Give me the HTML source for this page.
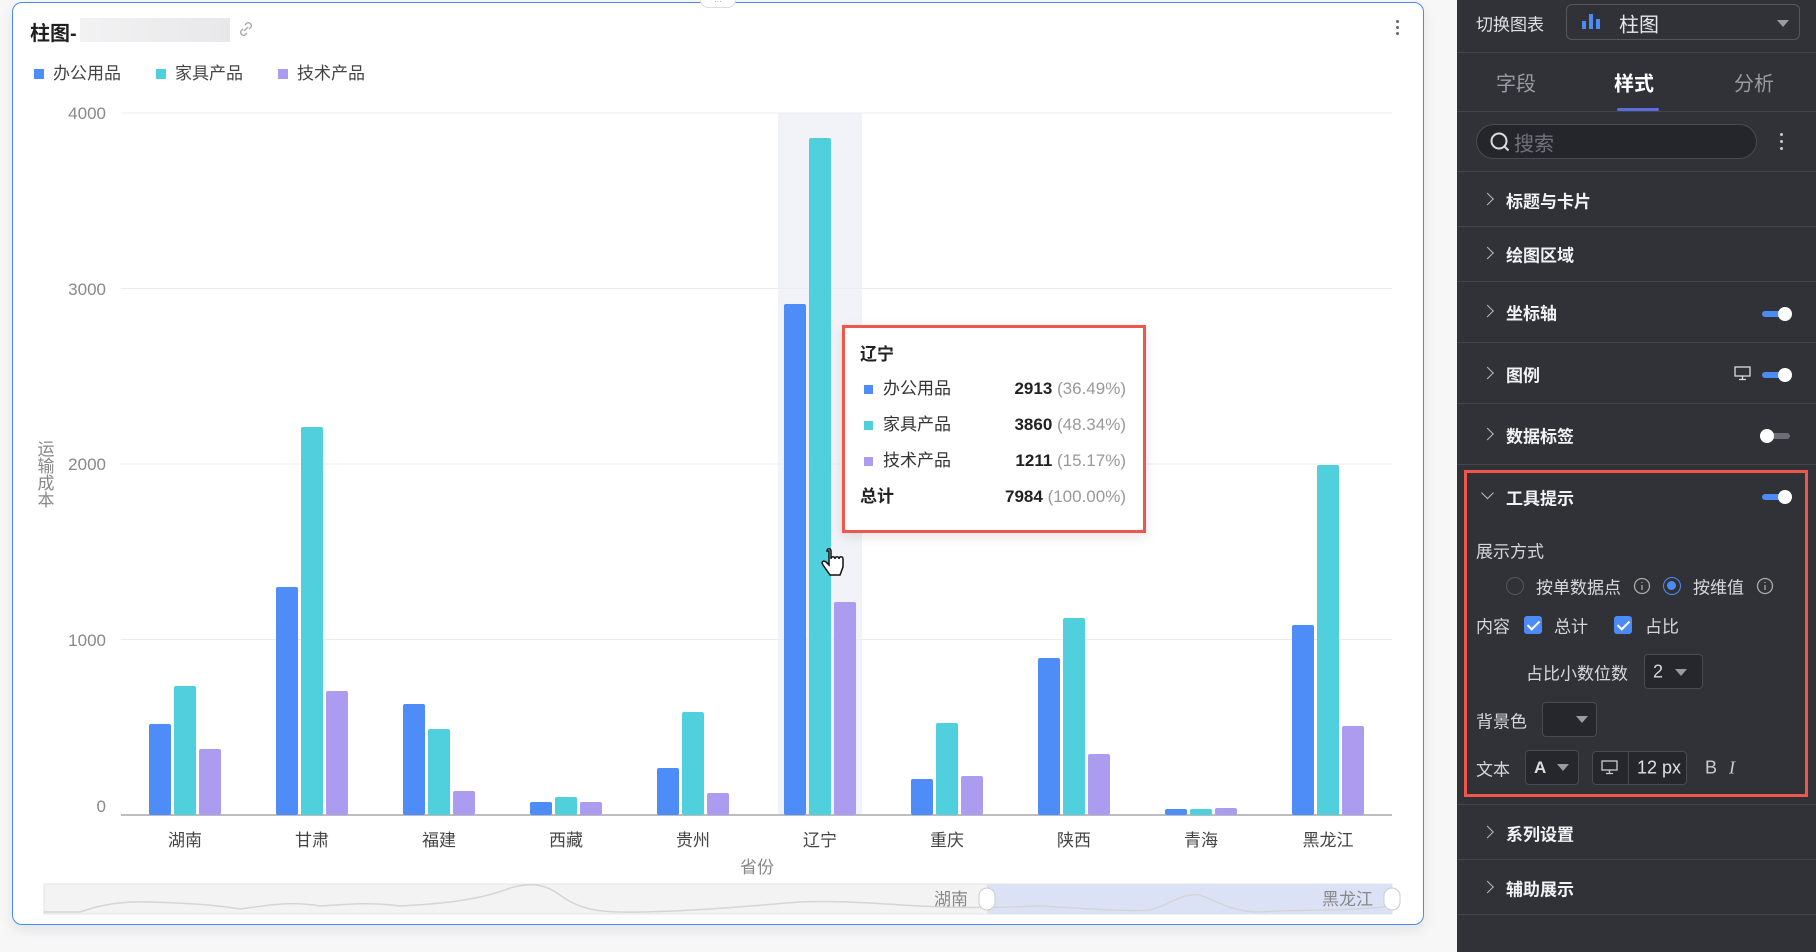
<!DOCTYPE html>
<html><head><meta charset="utf-8"><style>
*{box-sizing:border-box;margin:0;padding:0}
body{width:1816px;height:952px;background:#f7f7f8;font-family:"Liberation Sans","Noto Sans CJK SC",sans-serif;position:relative;overflow:hidden}
.card{position:absolute;left:12px;top:2px;width:1412px;height:923px;background:#fff;border:1.5px solid #4a8af4;border-radius:10px;box-shadow:0 6px 14px rgba(0,0,0,.08)}
.abs{position:absolute}
.panel{position:absolute;left:1457px;top:0;width:359px;height:952px;background:#313238;color:#e6e6ea}
.hr{position:absolute;left:0;width:359px;height:1px;background:#45464d}
.item{position:absolute;left:49px;font-size:17px;font-weight:bold;color:#f2f2f5;transform:translateY(-50%)}
.chev{position:absolute;left:26px;width:9px;height:9px;border-right:1.5px solid #bbb;border-top:1.5px solid #bbb;transform:translateY(-50%) rotate(45deg)}
.tog{position:absolute;left:305px;width:28px;height:6px;border-radius:3px;background:#4c8af5;transform:translateY(-50%)}
.tog::after{content:"";position:absolute;right:-2px;top:-4px;width:14px;height:14px;border-radius:50%;background:#fff}
.tog.off{background:#6c6e76}.tog.off::after{left:-2px;right:auto}
.lab{position:absolute;font-size:17px;color:#d8d8dc;transform:translateY(-50%)}
.box{position:absolute;border:1px solid #4a4b52;background:#26272c;border-radius:4px}
.tri{position:absolute;width:0;height:0;border-left:6px solid transparent;border-right:6px solid transparent;border-top:7px solid #9a9ca4}
.cb{position:absolute;width:18px;height:18px;background:#4c8af5;border-radius:3px;transform:translateY(-50%)}
.cb::after{content:"";position:absolute;left:6px;top:2px;width:5px;height:10px;border-right:2.5px solid #fff;border-bottom:2.5px solid #fff;transform:rotate(45deg)}
</style></head><body>
<div class="card"></div>
<div class="abs" style="left:700px;top:0;width:36px;height:8px;background:#fff;border:1px solid #ddd;border-top:none;border-radius:0 0 8px 8px;font-size:8px;color:#999;text-align:center;line-height:4px">···</div>
<div class="abs" style="left:30px;top:17px;font-size:20px;font-weight:bold;color:#1f1f1f">柱图-</div>
<div class="abs" style="left:80px;top:18px;width:150px;height:24px;background:linear-gradient(90deg,#f2f2f3,#e8e8ea)"></div>
<svg class="abs" style="left:237px;top:20px" width="18" height="18" viewBox="0 0 18 18" fill="none" stroke="#aaa" stroke-width="1.4"><path d="M7 11l4-4M8 5l2-2a3 3 0 014 4l-2 2M10 13l-2 2a3 3 0 01-4-4l2-2"/></svg>
<div class="abs" style="left:1396px;top:20px;width:3px;font-size:0">
<div style="width:3px;height:3px;background:#666;border-radius:50%;margin-bottom:3px"></div><div style="width:3px;height:3px;background:#666;border-radius:50%;margin-bottom:3px"></div><div style="width:3px;height:3px;background:#666;border-radius:50%"></div></div>
<div class="abs" style="left:34px;top:63px;font-size:17px;color:#444;display:flex;align-items:center;line-height:22px">
<span style="width:10px;height:10px;background:#4e8cf7;margin-right:9px"></span>办公用品
<span style="width:10px;height:10px;background:#4fd0dc;margin:0 9px 0 35px"></span>家具产品
<span style="width:10px;height:10px;background:#ac9cef;margin:0 9px 0 35px"></span>技术产品</div>

<svg class="abs" style="left:0;top:0" width="1440" height="952" font-family="Liberation Sans, Noto Sans CJK SC, sans-serif">
<rect x="778" y="113" width="84" height="702" fill="#f2f3f8"/>
<g stroke="#ececee" stroke-width="1">
<line x1="121" x2="1392" y1="113" y2="113"/><line x1="121" x2="1392" y1="288.5" y2="288.5"/><line x1="121" x2="1392" y1="464" y2="464"/><line x1="121" x2="1392" y1="639.5" y2="639.5"/></g>
<line x1="121" x2="1392" y1="815" y2="815" stroke="#bdbdbd" stroke-width="2"/>
<g fill="#888" font-size="17" text-anchor="end">
<text x="106" y="119">4000</text><text x="106" y="295">3000</text><text x="106" y="470">2000</text><text x="106" y="646">1000</text><text x="106" y="812">0</text></g>
<g fill="#888" font-size="17"><text x="44" y="440" writing-mode="tb">运输成本</text></g>
<g fill="#4e8cf7">
<rect x="149" y="724" width="22" height="91" rx="2"/><rect x="276" y="587" width="22" height="228" rx="2"/><rect x="403" y="704" width="22" height="111" rx="2"/><rect x="530" y="802" width="22" height="13" rx="2"/><rect x="657" y="768" width="22" height="47" rx="2"/><rect x="784" y="304" width="22" height="511" rx="2"/><rect x="911" y="779" width="22" height="36" rx="2"/><rect x="1038" y="658" width="22" height="157" rx="2"/><rect x="1165" y="809" width="22" height="6" rx="2"/><rect x="1292" y="625" width="22" height="190" rx="2"/></g>
<g fill="#4fd0dc">
<rect x="174" y="686" width="22" height="129" rx="2"/><rect x="301" y="427" width="22" height="388" rx="2"/><rect x="428" y="729" width="22" height="86" rx="2"/><rect x="555" y="797" width="22" height="18" rx="2"/><rect x="682" y="712" width="22" height="103" rx="2"/><rect x="809" y="138" width="22" height="677" rx="2"/><rect x="936" y="723" width="22" height="92" rx="2"/><rect x="1063" y="618" width="22" height="197" rx="2"/><rect x="1190" y="809" width="22" height="6" rx="2"/><rect x="1317" y="465" width="22" height="350" rx="2"/></g>
<g fill="#ac9cef">
<rect x="199" y="749" width="22" height="66" rx="2"/><rect x="326" y="691" width="22" height="124" rx="2"/><rect x="453" y="791" width="22" height="24" rx="2"/><rect x="580" y="802" width="22" height="13" rx="2"/><rect x="707" y="793" width="22" height="22" rx="2"/><rect x="834" y="602" width="22" height="213" rx="2"/><rect x="961" y="776" width="22" height="39" rx="2"/><rect x="1088" y="754" width="22" height="61" rx="2"/><rect x="1215" y="808" width="22" height="7" rx="2"/><rect x="1342" y="726" width="22" height="89" rx="2"/></g>
<g fill="#444" font-size="17" text-anchor="middle">
<text x="185" y="846">湖南</text><text x="312" y="846">甘肃</text><text x="439" y="846">福建</text><text x="566" y="846">西藏</text><text x="693" y="846">贵州</text><text x="820" y="846">辽宁</text><text x="947" y="846">重庆</text><text x="1074" y="846">陕西</text><text x="1201" y="846">青海</text><text x="1328" y="846">黑龙江</text>
<text x="757" y="873" fill="#888">省份</text></g>
<rect x="44" y="884" width="1348" height="30" fill="#f3f3f3" stroke="#e3e3e3"/>
<rect x="987" y="884" width="405" height="30" fill="#dbe2f6"/>
<path d="M44 912 L80 912 C100 905 120 901 150 902 C180 903 210 904 240 909 C270 905 290 901 320 906 C350 904 370 902 400 906 C440 904 480 900 510 888 C530 882 545 884 560 895 C580 910 600 913 640 912 C700 911 760 905 800 902 C840 900 880 904 920 906 C960 908 987 908 1040 906 C1080 908 1120 912 1150 910 C1170 905 1180 893 1200 895 C1215 900 1230 912 1260 912 C1300 909 1340 912 1392 906" fill="none" stroke="#d5d5d8" stroke-width="1.5"/>
<g fill="#888" font-size="17" text-anchor="end"><text x="968" y="905">湖南</text><text x="1373" y="905">黑龙江</text></g>
<rect x="979" y="888" width="16" height="22" rx="8" fill="#fff" stroke="#ccc"/><rect x="1384" y="888" width="16" height="22" rx="8" fill="#fff" stroke="#ccc"/>
<path d="M829 551 l0 14 l-3 -3 c-3 -2 -5 0 -3 3 l7 10 l10 0 l3 -8 l0 -8 c0 -3 -4 -3 -4 0 c0 -3 -4 -3 -4 0 c0 -3 -4 -3 -4 0 l0 -8 c0 -3 -4 -3 -4 0z" fill="#fff" stroke="#111" stroke-width="1.5"/>
</svg>

<div class="abs" style="left:842px;top:325px;width:304px;height:208px;background:#fff;border:3px solid #f0564a;box-shadow:0 4px 12px rgba(0,0,0,.1)"></div>
<div class="abs" style="left:860px;top:340px;font-size:17px;font-weight:bold;color:#222">辽宁</div>
<div class="abs" style="left:860px;top:371px;width:266px;font-size:17px;color:#333;line-height:36px">
<div style="display:flex;align-items:center"><span style="width:9px;height:9px;background:#4e8cf7;margin:0 10px 0 4px"></span>办公用品<span style="margin-left:auto;font-weight:bold;color:#222">2913&nbsp;</span><span style="color:#999">(36.49%)</span></div>
<div style="display:flex;align-items:center"><span style="width:9px;height:9px;background:#4fd0dc;margin:0 10px 0 4px"></span>家具产品<span style="margin-left:auto;font-weight:bold;color:#222">3860&nbsp;</span><span style="color:#999">(48.34%)</span></div>
<div style="display:flex;align-items:center"><span style="width:9px;height:9px;background:#ac9cef;margin:0 10px 0 4px"></span>技术产品<span style="margin-left:auto;font-weight:bold;color:#222">1211&nbsp;</span><span style="color:#999">(15.17%)</span></div>
<div style="display:flex;align-items:center;font-weight:bold;color:#222">总计<span style="margin-left:auto;font-weight:bold">7984&nbsp;</span><span style="color:#999;font-weight:normal">(100.00%)</span></div>
</div>

<div class="panel">
<div class="lab" style="left:19px;top:23px;color:#e0e0e4">切换图表</div>
<div class="box" style="left:109px;top:4px;width:234px;height:36px;background:#313238;border-color:#55565d;border-radius:6px"></div>
<svg class="abs" style="left:124px;top:13px" width="22" height="16"><rect x="1" y="8" width="4" height="8" fill="#4c8af5"/><rect x="8" y="1" width="4" height="15" fill="#4c8af5"/><rect x="15" y="6" width="4" height="10" fill="#4c8af5"/></svg>
<div class="lab" style="left:162px;top:23px;font-size:20px;color:#e8e8ec">柱图</div>
<div class="tri" style="left:320px;top:20px"></div>
<div class="hr" style="top:52px"></div>
<div class="lab" style="left:39px;top:82px;font-size:20px;color:#9a9ba2">字段</div>
<div class="lab" style="left:157px;top:82px;font-size:20px;color:#fff;font-weight:bold">样式</div>
<div class="lab" style="left:277px;top:82px;font-size:20px;color:#9a9ba2">分析</div>
<div class="abs" style="left:160px;top:108px;width:42px;height:3px;background:#5b6ee0;border-radius:2px"></div>
<div class="hr" style="top:111px"></div>
<div class="abs" style="left:19px;top:124px;width:281px;height:35px;background:#25262b;border:1px solid #4a4b52;border-radius:18px"></div>
<svg class="abs" style="left:32px;top:131px" width="22" height="22" fill="none" stroke="#ddd" stroke-width="2"><circle cx="10" cy="10" r="7.5"/><path d="M15.5 15.5l4 4"/></svg>
<div class="lab" style="left:57px;top:142px;font-size:20px;color:#70717a">搜索</div>
<div class="abs" style="left:323px;top:133px;width:3px"><div style="width:3px;height:3px;background:#ccc;border-radius:50%;margin-bottom:4px"></div><div style="width:3px;height:3px;background:#ccc;border-radius:50%;margin-bottom:4px"></div><div style="width:3px;height:3px;background:#ccc;border-radius:50%"></div></div>
<div class="hr" style="top:171px"></div>
<div class="chev" style="top:199px"></div><div class="item" style="top:200px">标题与卡片</div>
<div class="hr" style="top:226px"></div>
<div class="chev" style="top:253px"></div><div class="item" style="top:254px">绘图区域</div>
<div class="hr" style="top:281px"></div>
<div class="chev" style="top:311px"></div><div class="item" style="top:312px">坐标轴</div><div class="tog" style="top:314px"></div>
<div class="hr" style="top:342px"></div>
<div class="chev" style="top:373px"></div><div class="item" style="top:374px">图例</div><div class="tog" style="top:375px"></div>
<svg class="abs" style="left:277px;top:366px" width="17" height="15" fill="none" stroke="#ddd" stroke-width="1.3"><rect x="1" y="1" width="15" height="9"/><path d="M8.5 10v3M5 13.5h7"/></svg>
<div class="hr" style="top:403px"></div>
<div class="chev" style="top:434px"></div><div class="item" style="top:435px">数据标签</div><div class="tog off" style="top:436px"></div>
<div class="hr" style="top:464px"></div>
<div class="abs" style="left:7px;top:470px;width:344px;height:327px;border:3px solid #f0564a"></div>
<div class="chev" style="top:493px;transform:translateY(-50%) rotate(135deg)"></div><div class="item" style="top:497px">工具提示</div><div class="tog" style="top:497px"></div>
<div class="lab" style="left:19px;top:550px">展示方式</div>
<div class="abs" style="left:49px;top:577px;width:18px;height:18px;border:1.5px solid #55565d;border-radius:50%"></div>
<div class="lab" style="left:79px;top:586px">按单数据点</div>
<svg class="abs" style="left:176px;top:577px" width="18" height="18" fill="none" stroke="#aaa" stroke-width="1.3"><circle cx="9" cy="9" r="7.5"/><path d="M9 8v5M9 5v1"/></svg>
<div class="abs" style="left:206px;top:577px;width:18px;height:18px;border:1.5px solid #4c8af5;border-radius:50%"><div style="margin:3px;width:9px;height:9px;background:#4c8af5;border-radius:50%"></div></div>
<div class="lab" style="left:236px;top:586px">按维值</div>
<svg class="abs" style="left:299px;top:577px" width="18" height="18" fill="none" stroke="#aaa" stroke-width="1.3"><circle cx="9" cy="9" r="7.5"/><path d="M9 8v5M9 5v1"/></svg>
<div class="lab" style="left:19px;top:625px">内容</div>
<div class="cb" style="left:67px;top:625px"></div><div class="lab" style="left:97px;top:625px">总计</div>
<div class="cb" style="left:157px;top:625px"></div><div class="lab" style="left:188px;top:625px">占比</div>
<div class="lab" style="left:69px;top:672px">占比小数位数</div>
<div class="box" style="left:187px;top:654px;width:59px;height:35px"></div>
<div class="lab" style="left:196px;top:672px;font-size:18px">2</div><div class="tri" style="left:218px;top:669px"></div>
<div class="lab" style="left:19px;top:720px">背景色</div>
<div class="box" style="left:85px;top:702px;width:55px;height:35px"></div><div class="tri" style="left:119px;top:716px"></div>
<div class="lab" style="left:19px;top:768px">文本</div>
<div class="box" style="left:68px;top:750px;width:54px;height:35px"></div>
<div class="lab" style="left:77px;top:768px;font-weight:bold;color:#ddd">A</div><div class="tri" style="left:100px;top:764px"></div>
<div class="box" style="left:135px;top:751px;width:95px;height:34px"></div>
<div class="abs" style="left:171px;top:751px;width:1px;height:34px;background:#4a4b52"></div>
<svg class="abs" style="left:144px;top:760px" width="18" height="16" fill="none" stroke="#ccc" stroke-width="1.3"><rect x="1" y="1" width="15" height="9"/><path d="M8.5 10v3M5 13.5h7"/></svg>
<div class="lab" style="left:180px;top:768px;font-size:18px;color:#e0e0e4">12 px</div>
<div class="lab" style="left:248px;top:768px;font-size:18px;color:#ccc">B</div>
<div class="lab" style="left:272px;top:768px;font-size:18px;color:#ccc;font-style:italic;font-family:'Liberation Serif',serif">I</div>
<div class="hr" style="top:804px"></div>
<div class="chev" style="top:832px"></div><div class="item" style="top:833px">系列设置</div>
<div class="hr" style="top:859px"></div>
<div class="chev" style="top:887px"></div><div class="item" style="top:888px">辅助展示</div>
<div class="hr" style="top:914px"></div>
</div>
</body></html>
